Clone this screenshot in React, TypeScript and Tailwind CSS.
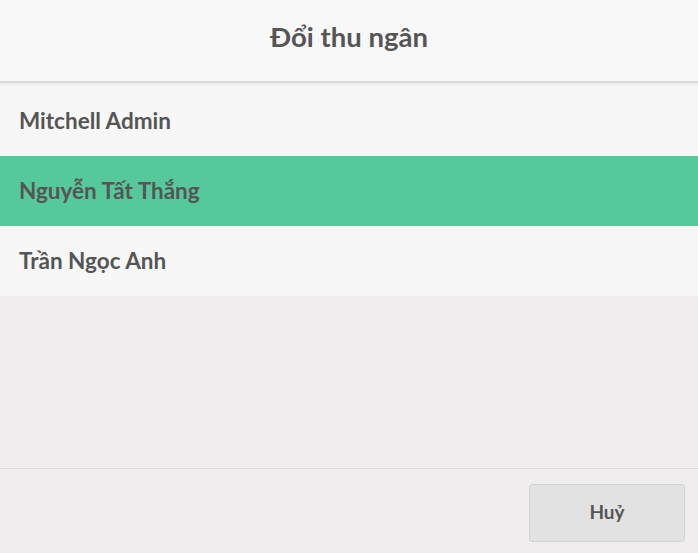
export default function App() {
  const rows = ["Mitchell Admin", "Nguyễn Tất Thắng", "Trần Ngọc Anh"];
  return (
    <div className="w-[698px] h-[553px] flex flex-col bg-[#efeded] text-[#555555]" style={{ fontFamily: "Lato, 'Noto Sans', sans-serif" }}>
      <div className="h-[83px] shrink-0 bg-[#f8f8f8] border-b-2 border-[#d9d9d9] flex items-center justify-center pb-[8px]">
        <span className="text-[27.5px] font-bold">Đổi thu ngân</span>
      </div>
      <div className="pt-[3px] flex flex-col">
        {rows.map((r, i) => (
          <div key={r} className={`h-[70px] flex items-center px-[19px] text-[22.5px] font-bold ${i === 1 ? "bg-[#56c99c]" : "bg-[#f7f7f7]"}`}>
            {r}
          </div>
        ))}
      </div>
      <div className="flex-1" />
      <div className="h-[85px] shrink-0 border-t border-[#dcdcdc] flex items-center justify-end pr-[13px] pt-[3px]">
        <button className="w-[156px] h-[58px] rounded-[3px] bg-[#e2e2e2] border border-[#d3d3d3] text-[19px] font-bold text-[#555555]">Huỷ</button>
      </div>
    </div>
  );
}
